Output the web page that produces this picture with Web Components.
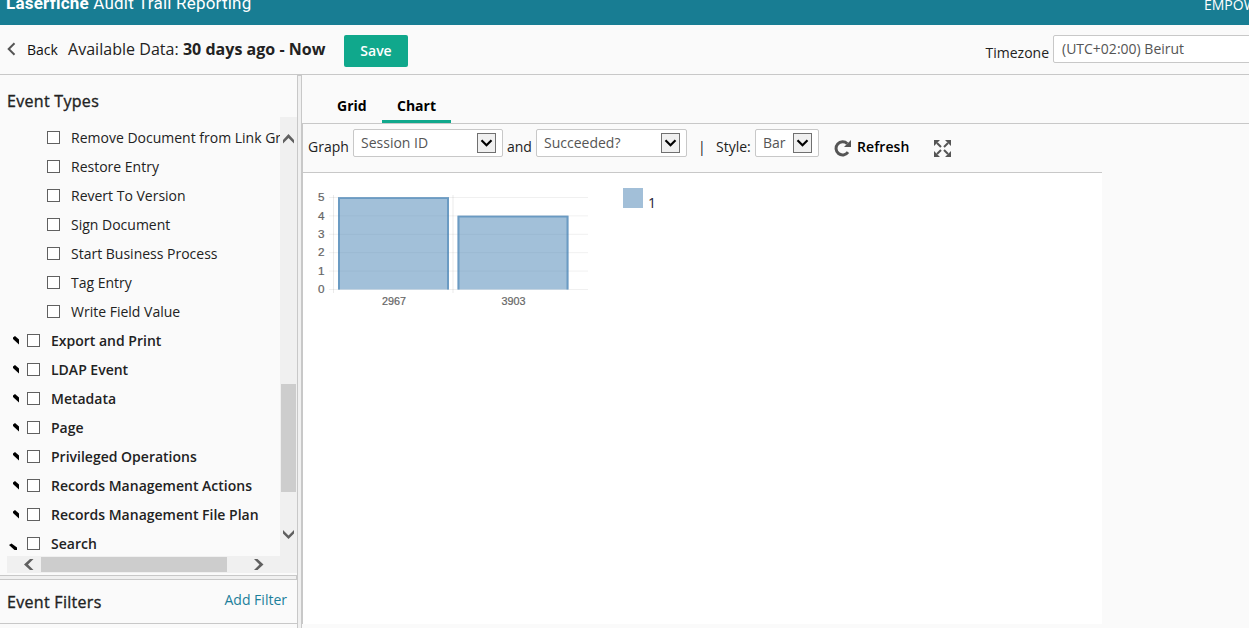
<!DOCTYPE html>
<html lang="en">
<head>
<meta charset="utf-8">
<title>Audit Trail Reporting</title>
<style>
  body {
    margin: 0;
    width: 1249px;
    height: 628px;
    overflow: hidden;
    background: #fafafa;
    color: #222;
    font: 14px/20px "Open Sans", sans-serif;
    --line: #c8c8c8;
    --accent: #10a88c;
  }
</style>
</head>
<body>
<audit-app></audit-app>

<script>
class AppHeader extends HTMLElement {
  constructor() {
    super();
    this.attachShadow({ mode: 'open' });
  }

  connectedCallback() {
    this.shadowRoot.innerHTML = `
      <style>
        :host {
          display: flex;
          justify-content: space-between;
          height: 25px;
          background: #187d93;
          color: #fff;
          overflow: hidden;
          white-space: nowrap;
        }
        .brand {
          margin: -8px 0 0 6px;
          font: 17px/22px Roboto, sans-serif;
          letter-spacing: 0.21px;
        }
        .user {
          width: 45px;
          margin-top: -5px;
        }
      </style>
      <div class="brand"><b>Laserfiche</b> Audit Trail Reporting</div>
      <div class="user">EMPOWER</div>
    `;
  }
}
customElements.define('app-header', AppHeader);

class SelectBox extends HTMLElement {
  constructor() {
    super();
    this.attachShadow({ mode: 'open' });
  }

  connectedCallback() {
    const arrow = this.hasAttribute('plain') ? '' : `
      <svg width="19" height="20" viewBox="0 0 19 20">
        <rect x=".5" y=".5" width="18" height="19" fill="#f0f0f0" stroke="#707070"/>
        <path d="M4.5 7.2l5 5 5-5" fill="none" stroke="#000" stroke-width="2.2"/>
      </svg>`;
    this.shadowRoot.innerHTML = `
      <style>
        :host {
          display: flex;
          justify-content: space-between;
          box-sizing: border-box;
          flex: none;
          height: 28px;
          padding: 3px 6px 0 7px;
          border: 1px solid #c8c8c8;
          border-radius: 2px;
          background: #fff;
          color: #555;
          line-height: 19px;
          white-space: nowrap;
        }
        :host([plain]) { padding-left: 8px; }
        svg { flex: none; }
      </style>
      <slot></slot>${arrow}
    `;
  }
}
customElements.define('select-box', SelectBox);

class PageBar extends HTMLElement {
  constructor() {
    super();
    this.attachShadow({ mode: 'open' });
  }

  connectedCallback() {
    this.shadowRoot.innerHTML = `
      <style>
        :host {
          display: flex;
          box-sizing: border-box;
          height: 50px;
          border-bottom: 1px solid var(--line);
          white-space: nowrap;
        }
        .back-icon { margin: 17px 10px 0 7px; }
        .back { width: 41px; margin-top: 15px; color: #111; }
        .range { width: 276px; margin-top: 14px; font-size: 16px; letter-spacing: 0.03px; }
        .save {
          width: 64px;
          height: 32px;
          margin-top: 10px;
          border-radius: 2px;
          background: var(--accent);
          color: #fff;
          font-weight: 600;
          line-height: 32px;
          text-align: center;
        }
        .zone { margin: 18px 4px 0 auto; }
        select-box { width: 210px; margin: 10px -14px 0 0; }
      </style>
      <svg class="back-icon" width="10" height="14" viewBox="0 0 10 14">
        <path d="M7.5 1.2L1.7 7l5.8 5.8" fill="none" stroke="#555" stroke-width="2"/>
      </svg>
      <div class="back">Back</div>
      <div class="range">Available Data: <b>30 days ago - Now</b></div>
      <div class="save">Save</div>
      <div class="zone">Timezone</div>
      <select-box plain>(UTC+02:00) Beirut</select-box>
    `;
  }
}
customElements.define('page-bar', PageBar);

class TreeRow extends HTMLElement {
  constructor() {
    super();
    this.attachShadow({ mode: 'open' });
  }

  connectedCallback() {
    const kind = this.getAttribute('kind');
    const marks = {
      closed: '<path d="M6 11.500L8 10l4 3.500V18.500L6 13z"/>',
      open: '<path d="M2 16l2.5-1.5L10 18.5V21H7.5z"/>'
    };
    this.shadowRoot.innerHTML = `
      <style>
        :host {
          display: flex;
          height: 29px;
          line-height: 29px;
          white-space: nowrap;
          color: #222;
        }
        :host([kind="leaf"]) { padding-left: 20px; }
        :host(:not([kind="leaf"])) { font-weight: 600; }
        svg { flex: none; }
        i {
          flex: none;
          box-sizing: border-box;
          width: 13px;
          height: 13px;
          margin: 8px 11px 0 0;
          border: 1px solid #606060;
          background: #fff;
        }
        slot { display: block; }
      </style>
      <svg width="20" height="29">${marks[kind] || ''}</svg>
      <i></i>
      <slot></slot>
    `;
  }
}
customElements.define('tree-row', TreeRow);

class EventTree extends HTMLElement {
  constructor() {
    super();
    this.attachShadow({ mode: 'open' });
  }

  connectedCallback() {
    const leaves = ['Remove Document from Link Group', 'Restore Entry', 'Revert To Version', 'Sign Document',
      'Start Business Process', 'Tag Entry', 'Write Field Value'];
    const groups = ['Export and Print', 'LDAP Event', 'Metadata', 'Page', 'Privileged Operations',
      'Records Management Actions', 'Records Management File Plan'];
    this.shadowRoot.innerHTML = `
      <style>
        :host {
          display: grid;
          grid-template: 439px 17px / 273px 17px;
          margin-left: 7px;
        }
        .rows { overflow: hidden; padding-top: 6px; }
        .vbar, .hbar { background: #f0f0f0; display: flex; }
        .vbar { flex-direction: column; }
        .hbar { grid-column: 1 / 3; }
        .vbar .thumb { width: 15px; height: 108px; margin: 239px 0 37px 1px; }
        .hbar .thumb { width: 186px; height: 15px; margin: 1px 27px 0 7px; }
        .thumb { background: #cdcdcd; }
        svg { fill: #606060; flex: none; }
        .up { margin: 16px 0 0 3px; }
        .down { margin-left: 3px; }
        .left { margin: 3px 0 0 17px; }
        .right { margin-top: 3px; }
      </style>
      <div class="rows">
        ${leaves.map(t => `<tree-row kind="leaf">${t}</tree-row>`).join('')}
        ${groups.map(t => `<tree-row kind="closed">${t}</tree-row>`).join('')}
        <tree-row kind="open">Search</tree-row>
      </div>
      <div class="vbar">
        <svg class="up" width="11" height="12"><path d="M0 7l5.5-6L11 7v3.5L5.5 5 0 10.5z"/></svg>
        <div class="thumb"></div>
        <svg class="down" width="11" height="12"><path d="M0 1l5.5 5.5L11 1v3.5L5.500 10 0 4.5z"/></svg>
      </div>
      <div class="hbar">
        <svg class="left" width="10" height="11"><path d="M6 0L0 5.5 6 11h3.5L4 5.5 9.5 0z"/></svg>
        <div class="thumb"></div>
        <svg class="right" width="10" height="11"><path d="M3.5 0l6 5.5-6 5.5H0l5.5-5.5L0 0z"/></svg>
      </div>
    `;
  }
}
customElements.define('event-tree', EventTree);

class SidePanel extends HTMLElement {
  constructor() {
    super();
    this.attachShadow({ mode: 'open' });
  }

  connectedCallback() {
    this.shadowRoot.innerHTML = `
      <style>
        :host { display: block; width: 297px; }
        h2 {
          margin: 0;
          font-size: 16px;
          font-weight: 400;
          line-height: 22px;
          letter-spacing: 0.3px;
          -webkit-text-stroke: 0.35px #222;
        }
        .types { height: 27px; padding: 15px 0 0 7px; }
        .split {
          box-sizing: border-box;
          width: 297px;
          height: 5px;
          margin-top: 2px;
          border: 1px solid var(--line);
          border-left: 0;
          background: #f0f0f0;
        }
        .filters {
          display: flex;
          justify-content: space-between;
          height: 43px;
          padding: 0 10px 0 7px;
          border-bottom: 1px solid var(--line);
        }
        .filters h2 { margin-top: 11px; }
        a { margin-top: 10px; color: #1b809a; }
      </style>
      <h2 class="types">Event Types</h2>
      <event-tree></event-tree>
      <div class="split"></div>
      <div class="filters"><h2>Event Filters</h2><a>Add Filter</a></div>
    `;
  }
}
customElements.define('side-panel', SidePanel);

class ChartToolbar extends HTMLElement {
  constructor() {
    super();
    this.attachShadow({ mode: 'open' });
  }

  connectedCallback() {
    this.shadowRoot.innerHTML = `
      <style>
        :host {
          display: flex;
          box-sizing: border-box;
          width: 799px;
          height: 49px;
          padding: 5px 0 0 5px;
          border-bottom: 1px solid var(--line);
          white-space: nowrap;
        }
        span { flex: none; margin-top: 8px; }
        .graph { width: 45px; }
        .and { width: 29px; margin-left: 4px; }
        .bar { width: 17px; margin-left: 12px; text-indent: -1px; }
        .style { width: 39px; }
        .refresh { width: 76px; color: #000; font-weight: 600; letter-spacing: 0.08px; }
        svg { flex: none; }
      </style>
      <span class="graph">Graph</span>
      <select-box style="width:150px">Session ID</select-box>
      <span class="and">and</span>
      <select-box style="width:151px">Succeeded?</select-box>
      <span class="bar">|</span>
      <span class="style">Style:</span>
      <select-box style="width:64px">Bar</select-box>
      <svg width="18" height="18" viewBox="0 0 18 18" style="margin:10px 5px 0 15px">
        <path d="M13.3 4.7A6.6 6.6 0 1 0 14 13.2" fill="none" stroke="#555" stroke-width="3"/>
        <path d="M17 1v7h-7z" fill="#555"/>
      </svg>
      <span class="refresh">Refresh</span>
      <svg width="17" height="17" viewBox="0 0 17 17" style="margin:11px 0 0 1px">
        <path d="M3 3l4 4M14 3l-4 4M3 14l4-4M14 14l-4-4" stroke="#555" stroke-width="2"/>
        <path d="M0 0h6L0 6zM17 0h-6l6 6zM0 17h6l-6-6zM17 17h-6l6-6z" fill="#555"/>
      </svg>
    `;
  }
}
customElements.define('chart-toolbar', ChartToolbar);

class BarChart extends HTMLElement {
  constructor() {
    super();
    this.attachShadow({ mode: 'open' });
  }

  connectedCallback() {
    const data = [['2967', 5], ['3903', 4]];
    const base = 116.5;
    const step = 18.4;
    const ticks = [0, 1, 2, 3, 4, 5].map(n => {
      const y = base - n * step;
      return `<path d="M26 ${y}h259" stroke="#000" stroke-opacity=".06"/>
        <text x="15" y="${y + 3.7}" textLength="6.5" lengthAdjust="spacingAndGlyphs">${n}</text>`;
    }).join('');
    const bars = data.map(([label, value], i) => {
      const x = 36 + i * 119.5;
      const top = base - value * step;
      return `<path d="M${x - 5.5} 22v98" stroke="#000" stroke-opacity=".08"/>
        <rect x="${x - 1}" y="${top}" width="111" height="${value * step}" fill="#4682b4" fill-opacity=".5"/>
        <path d="M${x} ${base}V${top + 0.5}h109V${base}" fill="none" stroke="#4682b4" stroke-opacity=".6" stroke-width="2"/>
        <text x="${x + 43}" y="132" textLength="24" lengthAdjust="spacingAndGlyphs">${label}</text>`;
    }).join('');
    this.shadowRoot.innerHTML = `
      <style>
        :host {
          display: flex;
          width: 799px;
          height: 451px;
          background: #fff;
        }
        text {
          font: 10px "Liberation Sans", sans-serif;
          fill: #666;
          stroke: #666;
          stroke-width: 0.2px;
        }
        .swatch {
          width: 20px;
          height: 20px;
          margin: 15px 5px 0 20px;
          background: #a2bfd8;
        }
        .name { margin-top: 20px; color: #223; }
      </style>
      <svg width="300" height="140">${ticks}${bars}</svg>
      <div class="swatch"></div>
      <div class="name">1</div>
    `;
  }
}
customElements.define('bar-chart', BarChart);

class ChartPanel extends HTMLElement {
  constructor() {
    super();
    this.attachShadow({ mode: 'open' });
  }

  connectedCallback() {
    this.shadowRoot.innerHTML = `
      <style>
        :host { display: block; flex: 1; }
        nav {
          display: flex;
          box-sizing: border-box;
          height: 49px;
          padding-left: 20px;
          border-bottom: 1px solid var(--line);
          color: #000;
          font-weight: 700;
        }
        nav span {
          box-sizing: border-box;
          height: 48px;
          padding: 21px 15px 0;
        }
        .grid { width: 60px; }
        .active {
          width: 69px;
          border-bottom: 3px solid var(--accent);
        }
        .body { border-left: 1px solid var(--line); height: 500px; }
      </style>
      <nav><span class="grid">Grid</span><span class="active">Chart</span></nav>
      <div class="body">
        <chart-toolbar></chart-toolbar>
        <bar-chart></bar-chart>
      </div>
    `;
  }
}
customElements.define('chart-panel', ChartPanel);

class AuditApp extends HTMLElement {
  constructor() {
    super();
    this.attachShadow({ mode: 'open' });
  }

  connectedCallback() {
    this.shadowRoot.innerHTML = `
      <style>
        :host { display: block; }
        main { display: flex; height: 553px; }
        .divider {
          box-sizing: border-box;
          flex: none;
          width: 5px;
          border: 1px solid var(--line);
          border-bottom: 0;
          background: #f0f0f0;
        }
      </style>
      <app-header></app-header>
      <page-bar></page-bar>
      <main>
        <side-panel></side-panel>
        <div class="divider"></div>
        <chart-panel></chart-panel>
      </main>
    `;
  }
}
customElements.define('audit-app', AuditApp);
</script>
</body>
</html>
